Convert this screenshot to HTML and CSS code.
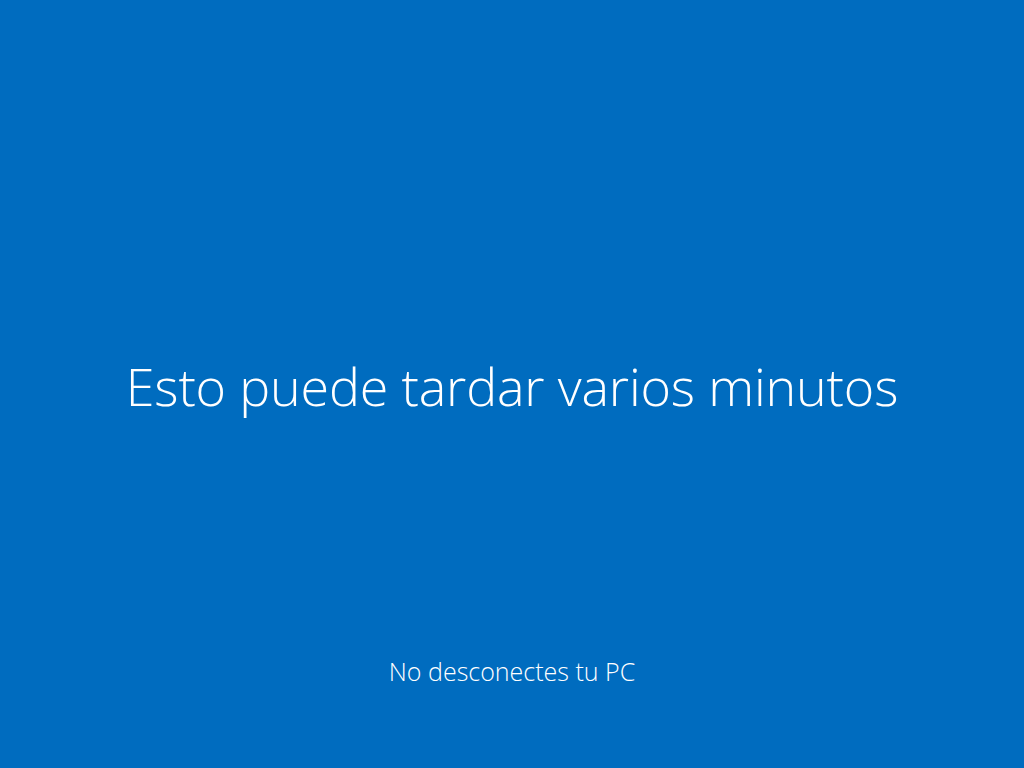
FILE: index.html
```html
<!DOCTYPE html>
<html lang="es">

<head>
    <meta charset="utf-8">
    <title>Configuración</title>
    <meta name="viewport" content="width=device-width, initial-scale=1">
    <link rel="stylesheet" href="styles.css">
</head>

<body>
    <div class="screen">
        <div class="main-content">
            <h1 class="message">Esto puede tardar varios minutos</h1>
        </div>
        <p class="hint">No desconectes tu PC</p>
    </div>
</body>

</html>
```

FILE: styles.css
```css
html,
body {
    margin: 0;
    padding: 0;
    height: 100%;
}

body {
    font-family: 'Open Sans', 'Noto Sans', sans-serif;
    background-color: #006cbf;
    color: #fff;
}

.screen {
    height: 100vh;
    display: flex;
    flex-direction: column;
}

.main-content {
    flex: 1;
    display: flex;
    align-items: center;
    justify-content: center;
    padding-top: 118px;
}

.message {
    margin: 0;
    font-size: 52px;
    font-weight: 300;
    letter-spacing: -0.17px;
    line-height: 1.2;
}

.hint {
    margin: 0;
    padding: 0 0 81px;
    text-align: center;
    font-size: 25px;
    font-weight: 300;
    line-height: 1.3;
}
```
